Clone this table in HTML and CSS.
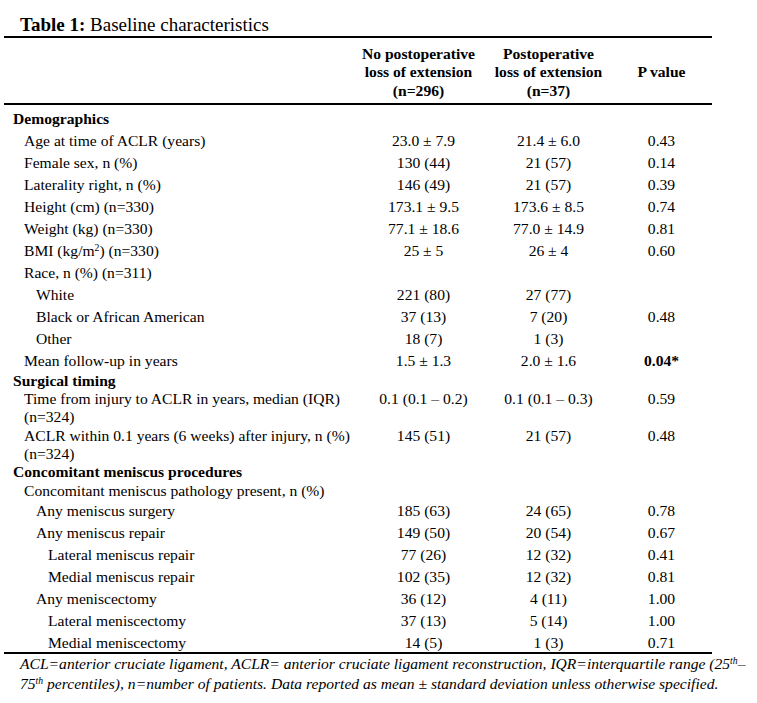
FILE: index.html
```html
<!DOCTYPE html>
<html lang="en">
<head>
<meta charset="utf-8">
<title>Table 1: Baseline characteristics</title>
<link rel="stylesheet" href="styles.css">
</head>
<body>
<div class="sheet">
  <p class="caption"><b>Table 1:</b> Baseline characteristics</p>
  <table class="baseline">
    <colgroup>
      <col class="c-label"><col class="c-num"><col class="c-num"><col class="c-p">
    </colgroup>
    <thead>
      <tr>
        <th></th>
        <th class="h-shift">No postoperative<br>loss of extension<br>(n=296)</th>
        <th>Postoperative<br>loss of extension<br>(n=37)</th>
        <th>P value</th>
      </tr>
    </thead>
    <tbody>
      <tr class="first"><td class="lv0">Demographics</td><td></td><td></td><td></td></tr>
      <tr><td class="lv1">Age at time of ACLR (years)</td><td class="num">23.0 ± 7.9</td><td class="num">21.4 ± 6.0</td><td class="num">0.43</td></tr>
      <tr><td class="lv1">Female sex, n (%)</td><td class="num">130 (44)</td><td class="num">21 (57)</td><td class="num">0.14</td></tr>
      <tr><td class="lv1">Laterality right, n (%)</td><td class="num">146 (49)</td><td class="num">21 (57)</td><td class="num">0.39</td></tr>
      <tr><td class="lv1">Height (cm) (n=330)</td><td class="num">173.1 ± 9.5</td><td class="num">173.6 ± 8.5</td><td class="num">0.74</td></tr>
      <tr><td class="lv1">Weight (kg) (n=330)</td><td class="num">77.1 ± 18.6</td><td class="num">77.0 ± 14.9</td><td class="num">0.81</td></tr>
      <tr><td class="lv1">BMI (kg/m<sup>2</sup>) (n=330)</td><td class="num">25 ± 5</td><td class="num">26 ± 4</td><td class="num">0.60</td></tr>
      <tr><td class="lv1">Race, n (%) (n=311)</td><td></td><td></td><td></td></tr>
      <tr><td class="lv2">White</td><td class="num">221 (80)</td><td class="num">27 (77)</td><td class="num"></td></tr>
      <tr><td class="lv2">Black or African American</td><td class="num">37 (13)</td><td class="num">7 (20)</td><td class="num">0.48</td></tr>
      <tr><td class="lv2">Other</td><td class="num">18 (7)</td><td class="num">1 (3)</td><td class="num"></td></tr>
      <tr><td class="lv1">Mean follow-up in years</td><td class="num">1.5 ± 1.3</td><td class="num">2.0 ± 1.6</td><td class="num"><b>0.04*</b></td></tr>
      <tr class="tight"><td class="lv0">Surgical timing</td><td></td><td></td><td></td></tr>
      <tr class="tight"><td class="lv1">Time from injury to ACLR in years, median (IQR) (n=324)</td><td class="num">0.1 (0.1 – 0.2)</td><td class="num">0.1 (0.1 – 0.3)</td><td class="num">0.59</td></tr>
      <tr class="tight"><td class="lv1">ACLR within 0.1 years (6 weeks) after injury, n (%) (n=324)</td><td class="num">145 (51)</td><td class="num">21 (57)</td><td class="num">0.48</td></tr>
      <tr class="tight"><td class="lv0">Concomitant meniscus procedures</td><td></td><td></td><td></td></tr>
      <tr class="tight"><td class="lv1">Concomitant meniscus pathology present, n (%)</td><td></td><td></td><td></td></tr>
      <tr><td class="lv2">Any meniscus surgery</td><td class="num">185 (63)</td><td class="num">24 (65)</td><td class="num">0.78</td></tr>
      <tr><td class="lv2">Any meniscus repair</td><td class="num">149 (50)</td><td class="num">20 (54)</td><td class="num">0.67</td></tr>
      <tr><td class="lv3">Lateral meniscus repair</td><td class="num">77 (26)</td><td class="num">12 (32)</td><td class="num">0.41</td></tr>
      <tr><td class="lv3">Medial meniscus repair</td><td class="num">102 (35)</td><td class="num">12 (32)</td><td class="num">0.81</td></tr>
      <tr><td class="lv2">Any meniscectomy</td><td class="num">36 (12)</td><td class="num">4 (11)</td><td class="num">1.00</td></tr>
      <tr><td class="lv3">Lateral meniscectomy</td><td class="num">37 (13)</td><td class="num">5 (14)</td><td class="num">1.00</td></tr>
      <tr class="end"><td class="lv3">Medial meniscectomy</td><td class="num">14 (5)</td><td class="num">1 (3)</td><td class="num">0.71</td></tr>
    </tbody>
  </table>
  <p class="note">ACL=anterior cruciate ligament, ACLR= anterior cruciate ligament reconstruction, IQR=interquartile range (25<sup>th</sup>–<br>75<sup>th</sup> percentiles), n=number of patients. Data reported as mean ± standard deviation unless otherwise specified.</p>
</div>
</body>
</html>
```

FILE: styles.css
```css
html, body {
  margin: 0;
  padding: 0;
  background: #fff;
}

body {
  font-family: "Liberation Serif", "Times New Roman", serif;
  font-size: 15.6px;
  color: #000;
}

.sheet {
  padding-top: 14px;
}

.caption {
  margin: 0 0 0 20px;
  font-size: 19px;
  line-height: 22px;
}

.baseline {
  margin-left: 4px;
  width: 708px;
  table-layout: fixed;
  border-collapse: separate;
  border-spacing: 0;
}

.c-label { width: 357px; }
.c-num { width: 125px; }
.c-p { width: 101px; }

.baseline th {
  font-weight: bold;
  text-align: center;
  vertical-align: middle;
  white-space: nowrap;
  line-height: 18.3px;
  padding: 7px 0 3px;
  border-top: 2px solid #000;
  border-bottom: 2px solid #000;
}

.baseline th.h-shift {
  padding-right: 10px;
}

.baseline td {
  padding: 1.85px 0;
  line-height: 18.3px;
  vertical-align: top;
}

.baseline td.num {
  text-align: center;
  white-space: nowrap;
}

.baseline td.lv0 { padding-left: 9px; font-weight: bold; }
.baseline td.lv1 { padding-left: 20px; }
.baseline td.lv2 { padding-left: 32px; }
.baseline td.lv3 { padding-left: 44px; }

.baseline tr.first td { padding-top: 5px; }

.baseline tr.tight td {
  padding-top: 0;
  padding-bottom: 0;
}

.baseline tr.end td {
  padding-bottom: 0;
  border-bottom: 2px solid #000;
}

sup {
  font-size: 0.62em;
  line-height: 0;
  vertical-align: 0.55em;
}

.note {
  margin: 0;
  padding-left: 20px;
  font-style: italic;
  line-height: 20px;
  white-space: nowrap;
}
```
